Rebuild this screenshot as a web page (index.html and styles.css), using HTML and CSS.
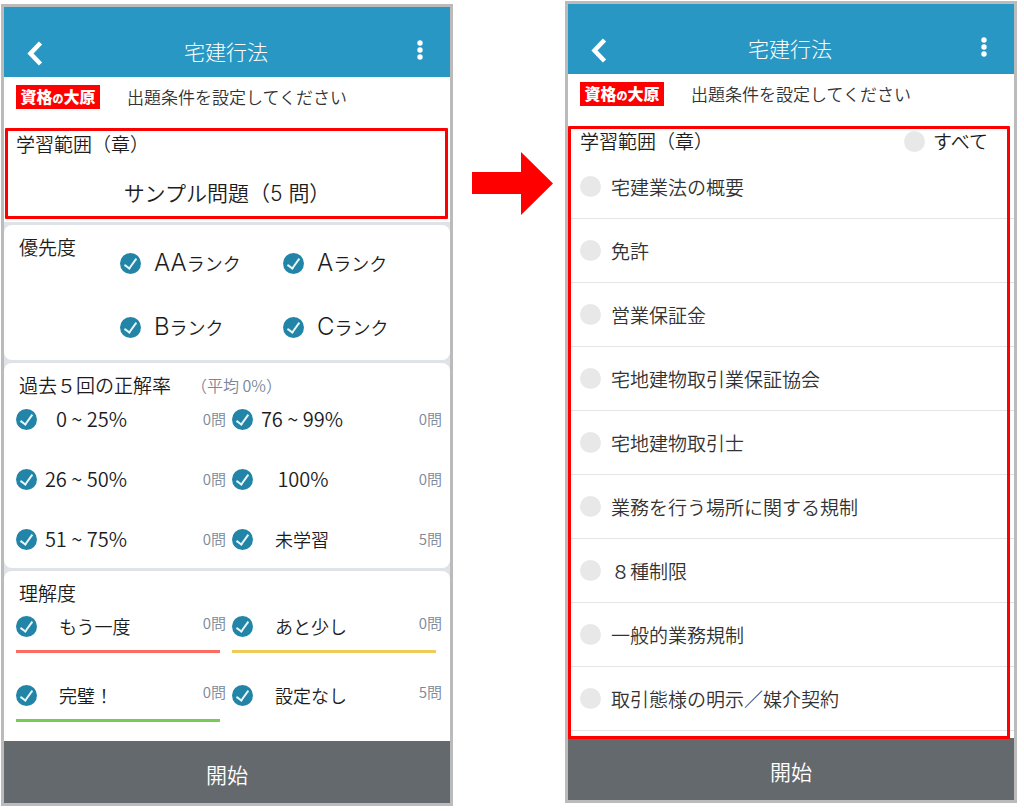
FILE: index.html
```html
<!DOCTYPE html>
<html lang="ja">
<head>
    <meta charset="UTF-8">
    <meta name="viewport" content="width=device-width, initial-scale=1.0">
    <title>宅建行法 - 出題条件</title>
    <link rel="stylesheet" href="styles.css">
</head>
<body>

<main class="guide">
    <section class="phone phone-left">
        <header class="topbar">
            <button class="icon-button" type="button" aria-label="戻る">
                <svg width="18" height="26" viewBox="0 0 18 26"><path d="M14.500 3L4.500 13.500L14.500 24" fill="none" stroke="#fff" stroke-width="4.500"/></svg>
            </button>
            <h1 class="topbar-title">宅建行法</h1>
            <button class="icon-button menu" type="button" aria-label="メニュー">
                <svg width="6" height="20" viewBox="0 0 6 20" fill="#fff"><circle cx="3" cy="3" r="2.7"/><circle cx="3" cy="10" r="2.7"/><circle cx="3" cy="17" r="2.7"/></svg>
            </button>
        </header>
        <div class="notice">
            <span class="brand">資格<small>の</small>大原</span>
            <p class="notice-text">出題条件を設定してください</p>
        </div>

        <div class="scope marked">
            <h2 class="heading">学習範囲（章）</h2>
            <p class="scope-value">サンプル問題（<span class="latin">5 </span>問）</p>
        </div>

        <div class="cards">
            <div class="card priority">
                <h2 class="heading">優先度</h2>
                <div class="rank-grid">
                    <label class="rank"><input class="check" type="checkbox" checked><span><b>AA</b>ランク</span></label>
                    <label class="rank"><input class="check" type="checkbox" checked><span><b>A</b>ランク</span></label>
                    <label class="rank"><input class="check" type="checkbox" checked><span><b>B</b>ランク</span></label>
                    <label class="rank"><input class="check" type="checkbox" checked><span><b>C</b>ランク</span></label>
                </div>
            </div>

            <div class="card accuracy">
                <div class="card-head">
                    <h2 class="heading">過去５回の正解率</h2>
                    <span class="average">（平均 0%）</span>
                </div>
                <div class="option-grid">
                    <label class="option"><input class="check" type="checkbox" checked><span class="range">0 ~ 25%</span><span class="count">0問</span></label>
                    <label class="option"><input class="check" type="checkbox" checked><span class="range">76 ~ 99%</span><span class="count">0問</span></label>
                    <label class="option"><input class="check" type="checkbox" checked><span class="range">26 ~ 50%</span><span class="count">0問</span></label>
                    <label class="option"><input class="check" type="checkbox" checked><span class="range single">100%</span><span class="count">0問</span></label>
                    <label class="option"><input class="check" type="checkbox" checked><span class="range">51 ~ 75%</span><span class="count">0問</span></label>
                    <label class="option"><input class="check" type="checkbox" checked><span class="option-name">未学習</span><span class="count">5問</span></label>
                </div>
            </div>

            <div class="card level">
                <h2 class="heading">理解度</h2>
                <div class="level-grid">
                    <label class="option line red"><input class="check" type="checkbox" checked><span class="option-name">もう一度</span><span class="count">0問</span></label>
                    <label class="option line yellow"><input class="check" type="checkbox" checked><span class="option-name">あと少し</span><span class="count">0問</span></label>
                    <label class="option line green"><input class="check" type="checkbox" checked><span class="option-name">完璧！</span><span class="count">0問</span></label>
                    <label class="option line"><input class="check" type="checkbox" checked><span class="option-name">設定なし</span><span class="count">5問</span></label>
                </div>
            </div>
        </div>
        <button class="start" type="button">開始</button>
    </section>

    <div class="arrow">
        <svg width="81" height="63" viewBox="0 0 81 63"><path d="M0 20H49V0L81 31.500L49 63V42H0Z" fill="#f00"/></svg>
    </div>

    <section class="phone">
        <header class="topbar">
            <button class="icon-button" type="button" aria-label="戻る">
                <svg width="18" height="26" viewBox="0 0 18 26"><path d="M14.500 3L4.500 13.500L14.500 24" fill="none" stroke="#fff" stroke-width="4.500"/></svg>
            </button>
            <h1 class="topbar-title">宅建行法</h1>
            <button class="icon-button menu" type="button" aria-label="メニュー">
                <svg width="6" height="20" viewBox="0 0 6 20" fill="#fff"><circle cx="3" cy="3" r="2.7"/><circle cx="3" cy="10" r="2.7"/><circle cx="3" cy="17" r="2.7"/></svg>
            </button>
        </header>
        <div class="notice">
            <span class="brand">資格<small>の</small>大原</span>
            <p class="notice-text">出題条件を設定してください</p>
        </div>

        <div class="chapters marked">
            <div class="chapters-head">
                <h2 class="heading">学習範囲（章）</h2>
                <label class="all"><input class="check" type="checkbox">すべて</label>
            </div>
            <ul class="chapter-list">
                <li><label class="chapter"><input class="check" type="checkbox">宅建業法の概要</label></li>
                <li><label class="chapter"><input class="check" type="checkbox">免許</label></li>
                <li><label class="chapter"><input class="check" type="checkbox">営業保証金</label></li>
                <li><label class="chapter"><input class="check" type="checkbox">宅地建物取引業保証協会</label></li>
                <li><label class="chapter"><input class="check" type="checkbox">宅地建物取引士</label></li>
                <li><label class="chapter"><input class="check" type="checkbox">業務を行う場所に関する規制</label></li>
                <li><label class="chapter"><input class="check" type="checkbox">８種制限</label></li>
                <li><label class="chapter"><input class="check" type="checkbox">一般的業務規制</label></li>
                <li><label class="chapter"><input class="check" type="checkbox">取引態様の明示／媒介契約</label></li>
            </ul>
        </div>
        <button class="start" type="button">開始</button>
    </section>
</main>

</body>
</html>
```
FILE: styles.css
```css
* {
    box-sizing: border-box;
}

body {
    margin: 0;
    background: #fff;
    color: #1c1c1c;
    font-family: "Noto Sans CJK JP", sans-serif;
    font-weight: 350;
}

h1, h2, p, ul {
    margin: 0;
    padding: 0;
    font-weight: 350;
}

button {
    border: 0;
    padding: 0;
    background: none;
    font-family: inherit;
    font-weight: 350;
}

svg {
    display: block;
}

.guide {
    display: grid;
    grid-template-columns: 1fr 112px 1fr;
    align-items: start;
    padding: 1px 7px 0 1px;
}

.phone {
    border: 3px solid #bbb;
    background: #fff;
}

.phone-left {
    margin-top: 3px;
}

.arrow {
    display: flex;
    justify-content: flex-end;
    padding: 151px 12px 0 0;
}

/* Header */
.topbar {
    display: flex;
    align-items: center;
    height: 70px;
    padding: 22px 27px 0 22px;
    background: #2997c4;
}

.icon-button {
    width: 18px;
}

.menu {
    display: flex;
    justify-content: flex-end;
    padding-bottom: 6px;
}

.topbar-title {
    flex: 1;
    padding: 0 0 4px 3px;
    color: #fff;
    font-size: 21px;
    font-weight: 300;
    line-height: 30px;
    text-align: center;
}

.notice {
    display: flex;
    align-items: center;
    gap: 27px;
    height: 51px;
    padding: 0 12px 11px;
}

.brand {
    width: 84px;
    height: 24px;
    background: #f00;
    color: #fff;
    font-size: 16px;
    font-weight: 900;
    line-height: 22px;
    text-align: center;
}

.brand small {
    font-size: 11px;
    line-height: 16px;
}

.notice-text {
    color: #333;
    font-size: 17px;
    line-height: 24px;
}

.heading {
    font-size: 19px;
    line-height: 28px;
}

/* Red frame over the area that is explained */
.marked {
    position: relative;
}

.marked::after {
    content: "";
    position: absolute;
    inset: 0 2px 3px 1px;
    border: 3px solid #f00;
    border-radius: 1px;
    pointer-events: none;
}

.scope {
    padding: 2px 12px 15px;
}

.scope-value {
    padding-top: 19px;
    font-size: 21px;
    line-height: 30px;
    text-align: center;
}

.latin {
    font-family: Inter, sans-serif;
    font-weight: 300;
    line-height: 20px;
}

/* Cards */
.cards {
    display: grid;
    gap: 3px;
    padding-top: 3px;
    background: #dfe3e8;
}

.card {
    padding: 8px 8px 0 12px;
    border-radius: 8px;
    background: #fff;
}

.card .heading {
    padding-left: 3px;
}

.check {
    appearance: none;
    flex: none;
    display: grid;
    place-items: center;
    width: 21px;
    height: 21px;
    margin: 0;
    border-radius: 50%;
    background: #e8e8e8;
}

.check:checked {
    background: #2285a8;
}

.check:checked::before {
    content: "";
    width: 5px;
    height: 11px;
    margin-bottom: 2px;
    border: solid #e8f4f8;
    border-width: 0 2px 2px 0;
    transform: rotate(36deg);
}

.priority {
    display: flex;
    gap: 44px;
    padding-bottom: 1px;
}

.rank-grid {
    flex: 1;
    display: grid;
    grid-template-columns: 163px 1fr;
    grid-auto-rows: 64px;
    margin-top: -2px;
}

.rank {
    display: flex;
    align-items: center;
    gap: 13px;
    font-size: 18px;
    line-height: 28px;
}

.rank b {
    font-family: Inter, sans-serif;
    font-size: 24px;
    font-weight: 300;
}

.card-head {
    display: flex;
    align-items: center;
    gap: 20px;
}

.average, .count {
    color: #7a8797;
    font-size: 15px;
    line-height: 24px;
}

.average {
    font-size: 16px;
}

.option-grid, .level-grid {
    display: grid;
    grid-template-columns: 1fr 1fr;
    column-gap: 6px;
}

.option-grid {
    grid-auto-rows: 60px;
    margin: -10px 0 -1px;
}

.option {
    display: flex;
    align-items: center;
}

.range {
    min-width: 90px;
    font-size: 20px;
    line-height: 30px;
    text-align: right;
}

.single {
    padding-left: 10px;
    text-align: center;
}

.option-name {
    padding-left: 22px;
    font-size: 18px;
    line-height: 30px;
}

.count {
    margin-left: auto;
}

.level {
    border-radius: 8px 8px 0 0;
}

.level-grid {
    row-gap: 27px;
    padding: 4px 0 19px;
}

.line {
    flex-wrap: wrap;
}

.line::after {
    content: "";
    width: 100%;
    height: 3px;
    margin: 9px 6px 0 0;
}

.line .count {
    padding-bottom: 6px;
}

.red::after {
    background: #fb6c62;
}

.yellow::after {
    background: #efcb57;
}

.green::after {
    background: #78ca54;
}

/* Chapter list */
.chapters {
    padding: 2px 0 7px;
}

.chapters::after {
    inset: 1px 4px -1px 0;
}

.chapters-head {
    display: flex;
    justify-content: space-between;
    padding: 0 26px 0 12px;
}

.all {
    display: flex;
    align-items: center;
    gap: 8px;
    font-size: 19px;
    line-height: 28px;
}

.chapter-list {
    list-style: none;
}

.chapter {
    display: flex;
    align-items: center;
    gap: 10px;
    height: 64px;
    padding: 0 12px;
    border-bottom: 1px solid #e4e4e4;
    color: #333;
    font-size: 19px;
    line-height: 30px;
}

.start {
    display: block;
    width: 100%;
    height: 62px;
    padding-top: 4px;
    background: #64696d;
    color: #fff;
    font-size: 21px;
    line-height: 30px;
}
```
